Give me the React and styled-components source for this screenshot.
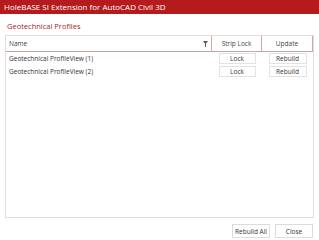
import React from 'react'
import styled, { createGlobalStyle } from 'styled-components'

const Global = createGlobalStyle`
  body {
    margin: 0;
    background: #fff;
    font-family: "Open Sans", "Noto Sans", sans-serif;
  }
`

const Window = styled.div`
  width: 319px;
  height: 240px;
  display: flex;
  flex-direction: column;
  background: #fff;
  box-sizing: border-box;
`

const TitleBar = styled.div`
  height: 14px;
  background: #b51a1c;
  color: #fff;
  font-size: 8px;
  line-height: 14px;
  padding-left: 4px;
  white-space: nowrap;
`

const Body = styled.div`
  flex: 1;
  display: flex;
  flex-direction: column;
  padding: 6px 5px 4px 5px;
`

const Heading = styled.div`
  color: #a0282c;
  font-size: 7.5px;
  height: 14px;
  padding-top: 1px;
  padding-left: 2px;
`

const Grid = styled.div`
  height: 181px;
  border: 1px solid #dedede;
  display: flex;
  flex-direction: column;
`

const HeaderRow = styled.div`
  display: grid;
  grid-template-columns: 1fr 50px 51px;
  height: 15px;
  border-bottom: 1px solid #c9a3a4;
`

const HeadCell = styled.div`
  font-size: 6.5px;
  color: #444;
  line-height: 15px;
  display: flex;
  align-items: center;
  justify-content: ${p => (p.$left ? 'space-between' : 'center')};
  padding: ${p => (p.$left ? '0 3px 0 3px' : '0')};
  border-right: 1px solid #cfa9aa;
`

const Row = styled.div`
  display: grid;
  grid-template-columns: 1fr 50px 51px;
  height: 13px;
  align-items: center;
`

const NameCell = styled.div`
  font-size: 6.5px;
  color: #333;
  padding-left: 3px;
`

const BtnCell = styled.div`
  display: flex;
  justify-content: center;
`

const CellButton = styled.button`
  width: ${p => p.$w}px;
  height: 11px;
  padding: 0;
  border: 1px solid #e2e2e2;
  background: #fff;
  font-family: inherit;
  font-size: 6.5px;
  color: #333;
  line-height: 9px;
`

const Footer = styled.div`
  display: flex;
  justify-content: flex-end;
  gap: 5px;
  padding-top: 6px;
  padding-right: 1px;
`

const FooterButton = styled.button`
  width: 38px;
  height: 14px;
  padding: 0;
  border: 1px solid #dcdcdc;
  background: #fff;
  font-family: inherit;
  font-size: 6.5px;
  color: #333;
`

const Filter = () => (
  <svg width="5" height="6" viewBox="0 0 5 6">
    <path d="M0 0H5L3 2.5V6H2V2.5Z" fill="#555" />
  </svg>
)

const rows = ['Geotechnical ProfileView (1)', 'Geotechnical ProfileView (2)']

export default function App() {
  return (
    <Window>
      <Global />
      <TitleBar>HoleBASE SI Extension for AutoCAD Civil 3D</TitleBar>
      <Body>
        <Heading>Geotechnical Profiles</Heading>
        <Grid>
          <HeaderRow>
            <HeadCell $left>
              <span>Name</span>
              <Filter />
            </HeadCell>
            <HeadCell>Strip Lock</HeadCell>
            <HeadCell>Update</HeadCell>
          </HeaderRow>
          {rows.map(r => (
            <Row key={r}>
              <NameCell>{r}</NameCell>
              <BtnCell>
                <CellButton $w={37}>Lock</CellButton>
              </BtnCell>
              <BtnCell>
                <CellButton $w={38}>Rebuild</CellButton>
              </BtnCell>
            </Row>
          ))}
        </Grid>
        <Footer>
          <FooterButton>Rebuild All</FooterButton>
          <FooterButton>Close</FooterButton>
        </Footer>
      </Body>
    </Window>
  )
}
